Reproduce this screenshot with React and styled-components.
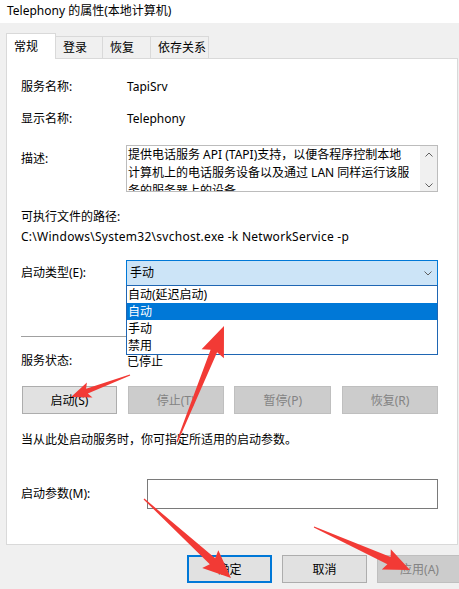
import React from 'react';
import styled, { createGlobalStyle } from 'styled-components';

const Global = createGlobalStyle`
  html, body { margin: 0; padding: 0; background: #f0f0f0; }
  body {
    font-family: "Noto Sans", "Noto Sans CJK SC", sans-serif;
    font-size: 12px;
    color: #000;
    overflow: hidden;
  }
  * { box-sizing: border-box; }
`;

const Window = styled.div`
  position: relative;
  width: 459px;
  height: 589px;
  overflow: hidden;
  background: #f0f0f0;
  display: flex;
  flex-direction: column;
`;

const TitleBar = styled.div`
  height: 23px;
  flex: none;
  background: #fff;
  padding: 0 0 1px 7px;
  display: flex;
  align-items: center;
  line-height: 16px;
  white-space: nowrap;
`;

const TabBar = styled.div`
  margin-top: 10px;
  height: 25px;
  padding-left: 6px;
  display: flex;
  align-items: flex-end;
  position: relative;
  z-index: 2;
`;

const Tab = styled.div`
  width: ${p => p.$w}px;
  height: ${p => (p.$active ? 26 : 22)}px;
  margin-right: -1px;
  margin-bottom: ${p => (p.$active ? -1 : 0)}px;
  padding-left: 7px;
  border: 1px solid #d9d9d9;
  border-bottom: none;
  background: ${p => (p.$active ? '#fff' : '#f0f0f0')};
  display: flex;
  align-items: center;
  line-height: 16px;
  position: relative;
  z-index: ${p => (p.$active ? 2 : 1)};
  white-space: nowrap;
`;

const Panel = styled.div`
  margin-left: 6px;
  width: 452px;
  background: #fff;
  border: 1px solid #d9d9d9;
  padding: 18px 19px 35px 14px;
  display: flex;
  flex-direction: column;
  position: relative;
  z-index: 1;
`;

const Row = styled.div`
  display: flex;
  align-items: ${p => (p.$top ? 'flex-start' : 'center')};
  margin-top: ${p => p.$mt || 0}px;
  line-height: 20px;
`;

const Label = styled.div`
  width: ${p => p.$w || 105}px;
  flex: none;
  white-space: nowrap;
  margin-top: ${p => p.$mt || 0}px;
`;

const Value = styled.div`
  padding-left: 1px;
  white-space: nowrap;
  margin-top: ${p => p.$mt || 0}px;
`;

const Line = styled.div`
  margin-top: ${p => p.$mt || 0}px;
  line-height: 20px;
  white-space: nowrap;
  letter-spacing: ${p => p.$ls || 0}px;
`;

const DescBox = styled.div`
  flex: 1;
  height: 47px;
  border: 1px solid #bcbcbc;
  display: flex;
  overflow: hidden;
`;

const DescText = styled.div`
  flex: 1;
  padding: 0 0 0 1px;
  line-height: 18px;
  white-space: nowrap;
  overflow: hidden;
`;

const ScrollTrack = styled.div`
  width: 17px;
  flex: none;
  background: #f0f0f0;
  display: flex;
  flex-direction: column;
  justify-content: space-between;
  align-items: center;
  padding: 6px 0 3px;
`;

const ComboWrap = styled.div`
  flex: 1;
  position: relative;
`;

const Combo = styled.div`
  height: 26px;
  background: #cce4f7;
  border: 1px solid #0078d7;
  display: flex;
  align-items: center;
  justify-content: space-between;
  padding: 0 5px 0 3px;
`;

const DropList = styled.div`
  position: absolute;
  top: 100%;
  left: 0;
  right: 0;
  margin-top: -1px;
  background: #fff;
  border: 1px solid #1f66b3;
  display: flex;
  flex-direction: column;
  z-index: 5;
`;

const DropItem = styled.div`
  height: 17px;
  line-height: 17px;
  padding-left: 1px;
  background: ${p => (p.$sel ? '#0078d7' : 'transparent')};
  color: ${p => (p.$sel ? '#fff' : '#000')};
  white-space: nowrap;
`;

const Separator = styled.div`
  margin-top: ${p => p.$mt || 0}px;
  height: 1px;
  background: #a0a0a0;
`;

const ButtonRow = styled.div`
  margin-top: ${p => p.$mt || 0}px;
  display: flex;
  justify-content: space-between;
  padding-left: 1px;
`;

const Button = styled.div`
  width: ${p => p.$w}px;
  height: 28px;
  flex: none;
  display: flex;
  align-items: center;
  justify-content: center;
  white-space: nowrap;
  background: ${p => (p.$disabled ? '#cccccc' : '#e1e1e1')};
  color: ${p => (p.$disabled ? '#838383' : '#000')};
  border: ${p => (p.$default ? '2px solid #0078d7' : p.$disabled ? '1px solid #bfbfbf' : '1px solid #adadad')};
`;

const Input = styled.div`
  flex: 1;
  height: 30px;
  border: 1px solid #7a7a7a;
  background: #fff;
`;

const BottomBar = styled.div`
  margin-top: 10px;
  display: flex;
  gap: 10px;
  padding-left: 187px;
`;

const Overlay = styled.svg`
  position: absolute;
  left: 0;
  top: 0;
  width: 459px;
  height: 589px;
  pointer-events: none;
  z-index: 10;
`;

function arrowPoints(t, p, headLen, headW, neckW, tailW) {
  const dx = p[0] - t[0];
  const dy = p[1] - t[1];
  const len = Math.hypot(dx, dy);
  const ux = dx / len, uy = dy / len;
  const nx = -uy, ny = ux;
  const bx = p[0] - ux * headLen, by = p[1] - uy * headLen;
  const pts = [
    [t[0] + nx * tailW, t[1] + ny * tailW],
    [bx + nx * neckW, by + ny * neckW],
    [bx - ux * 3 + nx * headW, by - uy * 3 + ny * headW],
    [p[0], p[1]],
    [bx - ux * 3 - nx * headW, by - uy * 3 - ny * headW],
    [bx - nx * neckW, by - ny * neckW],
    [t[0] - nx * tailW, t[1] - ny * tailW],
  ];
  return pts.map(q => q[0].toFixed(1) + ',' + q[1].toFixed(1)).join(' ');
}

const arrows = [
  { t: [130, 375], p: [71, 397], h: 17, w: 8, n: 2.5, tw: 0.6 },
  { t: [177, 442], p: [224, 326], h: 27, w: 12, n: 3.5, tw: 0.6 },
  { t: [144, 499], p: [231, 578], h: 25, w: 12, n: 4, tw: 0.6 },
  { t: [314, 527], p: [410, 570], h: 23, w: 11, n: 4, tw: 0.6 },
];

const Chevron = ({ up }) => (
  <svg width="8" height="5" viewBox="0 0 8 5">
    <polyline
      points={up ? '0.5,4.5 4,1 7.5,4.5' : '0.5,0.5 4,4 7.5,0.5'}
      fill="none"
      stroke="#606060"
      strokeWidth="1"
    />
  </svg>
);

export default function App() {
  return (
    <>
      <Global />
      <Window>
        <TitleBar>Telephony 的属性(本地计算机)</TitleBar>
        <TabBar>
          <Tab $w={50} $active>常规</Tab>
          <Tab $w={48}>登录</Tab>
          <Tab $w={49}>恢复</Tab>
          <Tab $w={59}>依存关系</Tab>
        </TabBar>
        <Panel>
          <Row>
            <Label>服务名称:</Label>
            <Value>TapiSrv</Value>
          </Row>
          <Row $mt={12}>
            <Label>显示名称:</Label>
            <Value>Telephony</Value>
          </Row>
          <Row $mt={16} $top>
            <Label $mt={4}>描述:</Label>
            <DescBox>
              <DescText>
                <div>提供电话服务 API (TAPI)支持，以便各程序控制本地</div>
                <div>计算机上的电话服务设备以及通过 LAN 同样运行该服</div>
                <div>务的服务器上的设备</div>
              </DescText>
              <ScrollTrack>
                <Chevron up />
                <Chevron />
              </ScrollTrack>
            </DescBox>
          </Row>
          <Line $mt={15}>可执行文件的路径:</Line>
          <Line $ls={0.27}>C:\Windows\System32\svchost.exe -k NetworkService -p</Line>
          <Row $mt={13}>
            <Label>启动类型(E):</Label>
            <ComboWrap>
              <Combo>
                <span>手动</span>
                <Chevron />
              </Combo>
              <DropList>
                <DropItem>自动(延迟启动)</DropItem>
                <DropItem $sel>自动</DropItem>
                <DropItem>手动</DropItem>
                <DropItem>禁用</DropItem>
              </DropList>
            </ComboWrap>
          </Row>
          <Separator $mt={50} />
          <Row $mt={13}>
            <Label>服务状态:</Label>
            <Value $mt={2}>已停止</Value>
          </Row>
          <ButtonRow $mt={14}>
            <Button $w={95}>启动(S)</Button>
            <Button $w={96} $disabled>停止(T)</Button>
            <Button $w={97} $disabled>暂停(P)</Button>
            <Button $w={96} $disabled>恢复(R)</Button>
          </ButtonRow>
          <Line $mt={16}>当从此处启动服务时，你可指定所适用的启动参数。</Line>
          <Row $mt={29}>
            <Label $w={126}>启动参数(M):</Label>
            <Input />
          </Row>
        </Panel>
        <BottomBar>
          <Button $w={85} $default>确定</Button>
          <Button $w={85}>取消</Button>
          <Button $w={85} $disabled>应用(A)</Button>
        </BottomBar>
        <Overlay viewBox="0 0 459 589">
          {arrows.map((a, i) => (
            <polygon key={i} points={arrowPoints(a.t, a.p, a.h, a.w, a.n, a.tw)} fill="#f23a35" />
          ))}
        </Overlay>
      </Window>
    </>
  );
}
